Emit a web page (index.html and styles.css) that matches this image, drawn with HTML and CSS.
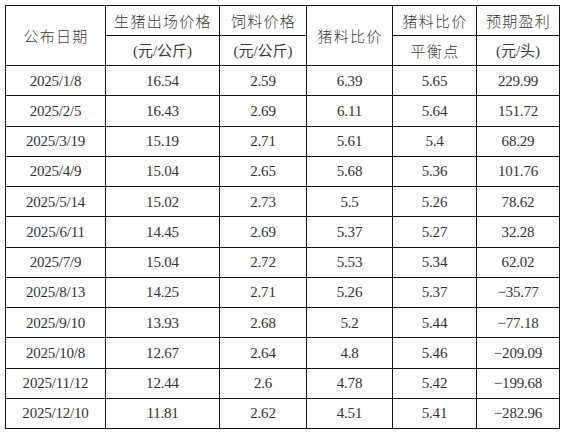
FILE: index.html
```html
<!DOCTYPE html>
<html lang="zh-CN">
<head>
<meta charset="utf-8">
<title>猪料比价</title>
<link rel="stylesheet" href="styles.css">
</head>
<body>
<table class="grid">
  <colgroup>
    <col class="c1"><col class="c2"><col class="c3"><col class="c4"><col class="c5"><col class="c6">
  </colgroup>
  <thead>
    <tr class="hrow">
      <th rowspan="2" class="cjk">公布日期</th>
      <th class="cjk">生猪出场价格</th>
      <th class="cjk">饲料价格</th>
      <th rowspan="2" class="cjk">猪料比价</th>
      <th class="cjk">猪料比价</th>
      <th class="cjk">预期盈利</th>
    </tr>
    <tr class="hrow">
      <th class="unit">(元/公斤)</th>
      <th class="unit">(元/公斤)</th>
      <th class="cjk">平衡点</th>
      <th class="unit">(元/头)</th>
    </tr>
  </thead>
  <tbody>
    <tr><td>2025/1/8</td><td>16.54</td><td>2.59</td><td>6.39</td><td>5.65</td><td>229.99</td></tr>
    <tr><td>2025/2/5</td><td>16.43</td><td>2.69</td><td>6.11</td><td>5.64</td><td>151.72</td></tr>
    <tr><td>2025/3/19</td><td>15.19</td><td>2.71</td><td>5.61</td><td>5.4</td><td>68.29</td></tr>
    <tr><td>2025/4/9</td><td>15.04</td><td>2.65</td><td>5.68</td><td>5.36</td><td>101.76</td></tr>
    <tr><td>2025/5/14</td><td>15.02</td><td>2.73</td><td>5.5</td><td>5.26</td><td>78.62</td></tr>
    <tr><td>2025/6/11</td><td>14.45</td><td>2.69</td><td>5.37</td><td>5.27</td><td>32.28</td></tr>
    <tr><td>2025/7/9</td><td>15.04</td><td>2.72</td><td>5.53</td><td>5.34</td><td>62.02</td></tr>
    <tr><td>2025/8/13</td><td>14.25</td><td>2.71</td><td>5.26</td><td>5.37</td><td>−35.77</td></tr>
    <tr><td>2025/9/10</td><td>13.93</td><td>2.68</td><td>5.2</td><td>5.44</td><td>−77.18</td></tr>
    <tr><td>2025/10/8</td><td>12.67</td><td>2.64</td><td>4.8</td><td>5.46</td><td>−209.09</td></tr>
    <tr><td>2025/11/12</td><td>12.44</td><td>2.6</td><td>4.78</td><td>5.42</td><td>−199.68</td></tr>
    <tr><td>2025/12/10</td><td>11.81</td><td>2.62</td><td>4.51</td><td>5.41</td><td>−282.96</td></tr>
  </tbody>
</table>
</body>
</html>
```
FILE: styles.css
```css
html, body {
  margin: 0;
  padding: 0;
  background: #ffffff;
}
body {
  padding: 5px 0 0 5px;
  font-family: "Liberation Serif", "Noto Sans CJK SC", serif;
  color: #2e2e2e;
}
.grid {
  border-collapse: collapse;
  table-layout: fixed;
  width: 554px;
}
.c1 { width: 100px; }
.c2 { width: 114px; }
.c3 { width: 87px; }
.c4 { width: 86px; }
.c5 { width: 84px; }
.c6 { width: 83px; }
.grid th, .grid td {
  border: 1.2px solid #111;
  padding: 0;
  text-align: center;
  vertical-align: middle;
  font-size: 15px;
  font-weight: normal;
  line-height: 18px;
}
.grid .hrow { height: 30px; }
.grid tbody tr { height: 30.25px; }
.grid .cjk {
  font-family: "Noto Sans CJK SC", sans-serif;
  font-weight: 300;
  font-size: 15px;
  letter-spacing: 1.3px;
  padding-left: 1px;
  color: #3a3a3a;
}
.grid .unit {
  font-family: "Liberation Serif", "Noto Sans CJK SC", serif;
  font-weight: normal;
  color: #3a3a3a;
}
.grid td {
  letter-spacing: -0.2px;
  color: #333333;
}
```
